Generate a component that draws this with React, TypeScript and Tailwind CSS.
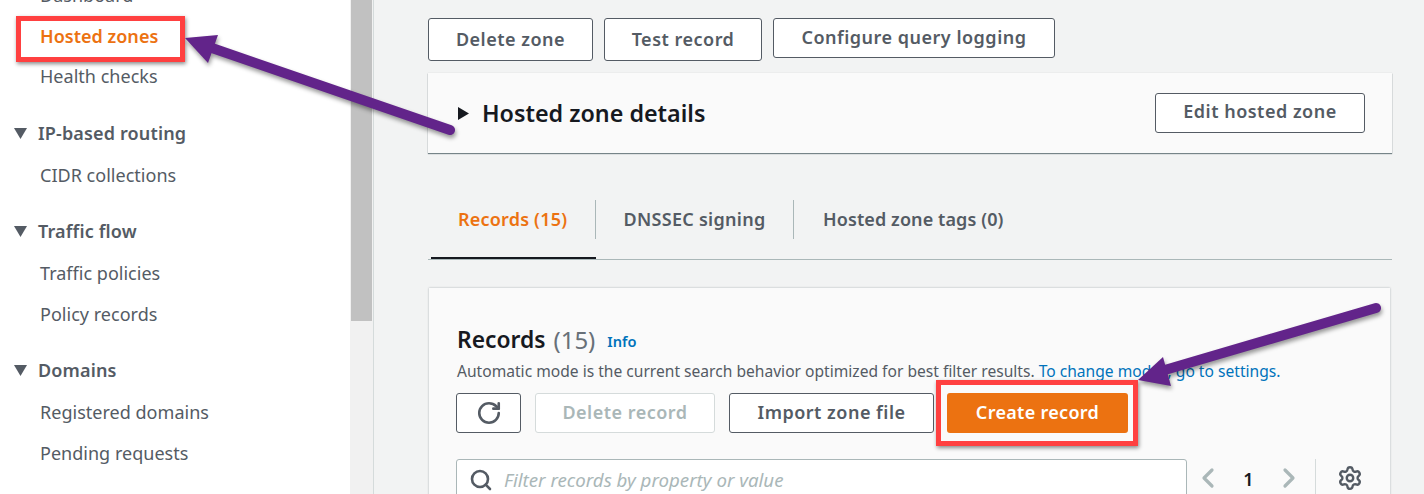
import React from 'react';
import { ChevronLeft, ChevronRight, RotateCw, Search, Settings } from 'lucide-react';

const fontClass = "font-['Noto_Sans',sans-serif]";
const btn =
  'flex items-center justify-center rounded-[3px] border border-[#545b64] bg-white text-[18px] font-semibold tracking-[0.5px] text-[#545b64]';

function NavItem({ label, active, tall }: { label: string; active?: boolean; tall?: boolean }) {
  return (
    <div
      className={`flex items-center pl-10 text-[18px] tracking-[0.02px] ${tall ? 'h-10' : 'h-[41px]'} ${
        active ? 'font-semibold text-[#ec7211]' : 'text-[#545b64]'
      }`}
    >
      {label}
    </div>
  );
}

function NavHeader({ label }: { label: string }) {
  return (
    <div className="mb-px flex h-[41px] items-center pl-[14px] text-[18px] font-semibold tracking-[0.15px] text-[#545b64]">
      <svg width="13" height="11" viewBox="0 0 13 11" className="mr-[11px]">
        <path d="M0 0h13L6.5 11z" fill="#545b64" />
      </svg>
      {label}
    </div>
  );
}

function Sidebar() {
  return (
    <nav className="w-[350px] shrink-0 bg-white">
      <div className="-mt-[25px]">
        <NavItem label="Dashboard" />
        <NavItem label="Hosted zones" active tall />
        <NavItem label="Health checks" />
      </div>
      <div className="mt-4">
        <NavHeader label="IP-based routing" />
        <NavItem label="CIDR collections" />
      </div>
      <div className="mt-[15px]">
        <NavHeader label="Traffic flow" />
        <NavItem label="Traffic policies" />
        <NavItem label="Policy records" />
      </div>
      <div className="mt-[15px]">
        <NavHeader label="Domains" />
        <NavItem label="Registered domains" />
        <NavItem label="Pending requests" />
      </div>
    </nav>
  );
}

function Tabs() {
  return (
    <div className="mt-[47px] flex h-[60px] items-start border-b border-[#aab7b8] pl-[3px]">
      <div className="flex h-[59px] w-[165px] border-b-2 border-[#16191f]">
        <div className="flex h-[39px] w-full items-center border-r border-[#aab7b8] pl-[27px] text-[18px] font-semibold tracking-[0.2px] text-[#ec7211]">
          Records (15)
        </div>
      </div>
      <div className="flex h-[39px] w-[198px] items-center justify-center border-r border-[#aab7b8] text-[18px] font-semibold tracking-[0.28px] text-[#545b64]">
        DNSSEC signing
      </div>
      <div className="flex h-[39px] items-center pl-[29px] text-[18px] font-semibold tracking-[0.1px] text-[#545b64]">
        Hosted zone tags (0)
      </div>
    </div>
  );
}

function RecordsCard() {
  return (
    <section className="mt-[28px] ml-px mr-[2px] h-[260px] bg-[#fafafa] pl-[27px] pt-[33px] shadow-[0_0_2px_rgba(0,28,36,0.3)]">
      <div className="ml-px flex h-[36px] items-center pt-[2px]">
        <h2 className="text-[22.8px] font-semibold text-[#16191f]">Records</h2>
        <span className="ml-[8px] text-[24px] text-[#687078]">(15)</span>
        <span className="ml-3 mt-1 text-[14.6px] font-semibold text-[#0073bb]">Info</span>
      </div>
      <p className="ml-px mt-[2px] h-6 text-[15.6px] leading-6 text-[#545b64]">
        Automatic mode is the current search behavior optimized for best filter results.{' '}
        <span className="text-[#0073bb]">To change modes, go to settings.</span>
      </p>
      <div className="mt-[10px] flex gap-[14px]">
        <button className={`${btn} h-10 w-[65px]`}>
          <RotateCw size={26} strokeWidth={2.4} />
        </button>
        <button className="flex h-10 w-[180px] items-center justify-center rounded-[3px] border border-[#d5dbdb] bg-white pb-[2px] text-[18px] font-semibold tracking-[0.5px] text-[#aab7b8]">
          Delete record
        </button>
        <button className={`${btn} h-10 w-[205px] pb-[2px]`}>Import zone file</button>
        <button className="-ml-px flex h-10 w-[181px] items-center justify-center rounded-[3px] bg-[#ec7211] pb-[2px] text-[18px] font-semibold tracking-[0.3px] text-white">
          Create record
        </button>
      </div>
      <div className="mt-[26px] flex items-start">
        <div className="flex h-[50px] w-[731px] items-start rounded-[3px] border border-[#aab7b8] bg-white pl-[12px] pt-[6px] text-[18.7px] italic text-[#aab7b8]">
          <Search size={24} strokeWidth={2.6} className="mr-[11px] mt-[2px] text-[#545b64]" />
          Filter records by property or value
        </div>
        <div className="flex h-[50px] items-start pt-[3px] text-[#aab7b8]">
          <ChevronLeft size={32} strokeWidth={2.4} className="ml-[5px]" />
          <span className="w-[49px] pt-[4px] text-center text-[18px] font-semibold text-[#16191f]">1</span>
          <ChevronRight size={32} strokeWidth={2.4} className="mr-[10px]" />
        </div>
        <div className="flex h-[50px] items-start border-l border-[#d5dbdb] pl-[21px] pt-[6px]">
          <Settings size={26} strokeWidth={2.2} className="text-[#545b64]" />
        </div>
      </div>
    </section>
  );
}

export default function App() {
  return (
    <div className={`relative flex h-[494px] w-[1424px] overflow-hidden bg-[#f2f3f3] ${fontClass}`}>
      <Sidebar />
      <div className="w-[23px] shrink-0 bg-[#f1f1f1] px-px">
        <div className="h-[321px] w-[21px] bg-[#c1c1c1]" />
      </div>
      <div className="w-px shrink-0 bg-[#d5dbdb]" />
      <main className="ml-[54px] w-[964px] shrink-0">
        <div className="mt-[18px] flex items-start gap-[11px]">
          <button className={`${btn} h-[43px] w-[165px]`}>Delete zone</button>
          <button className={`${btn} h-[43px] w-[158px]`}>Test record</button>
          <button className={`${btn} h-10 w-[282px] pb-[2px]`}>Configure query logging</button>
        </div>
        <section className="mt-3 flex h-[80px] items-center justify-between bg-[#fafafa] pl-[30px] pr-[27px] shadow-[0_1px_1px_rgba(0,28,36,0.5),0_0_1px_rgba(0,28,36,0.15)]">
          <div className="flex items-center">
            <svg width="11" height="13" viewBox="0 0 11 13" className="mr-[14px]">
              <path d="M0 0l11 6.5L0 13z" fill="#16191f" />
            </svg>
            <h2 className="-ml-px text-[23.3px] font-semibold text-[#16191f]">Hosted zone details</h2>
          </div>
          <button className={`${btn} -mt-[1px] h-10 w-[210px] pb-[2px]`}>Edit hosted zone</button>
        </section>
        <Tabs />
        <RecordsCard />
      </main>

      {/* annotation boxes */}
      <div className="absolute left-4 top-4 h-[46px] w-[169px] border-[5px] border-[#ff4040] shadow-[1px_2px_4px_rgba(0,0,0,0.45)]" />
      <div className="absolute left-[936px] top-[380px] h-[66px] w-[202px] border-[5px] border-[#ff4040] shadow-[1px_2px_4px_rgba(0,0,0,0.45)]" />

      {/* annotation arrows */}
      <svg
        className="pointer-events-none absolute left-0 top-0 drop-shadow-[1px_3px_2px_rgba(0,0,0,0.4)]"
        width="1424"
        height="494"
        viewBox="0 0 1424 494"
      >
        <path d="M450 130L212 48" stroke="#62248a" strokeWidth="10" strokeLinecap="round" />
        <path d="M185 38L218 35L208 63z" fill="#62248a" />
        <path d="M1376 308L1158 372" stroke="#62248a" strokeWidth="10" strokeLinecap="round" />
        <path d="M1138 380L1163 357L1171 386z" fill="#62248a" />
      </svg>
    </div>
  );
}
